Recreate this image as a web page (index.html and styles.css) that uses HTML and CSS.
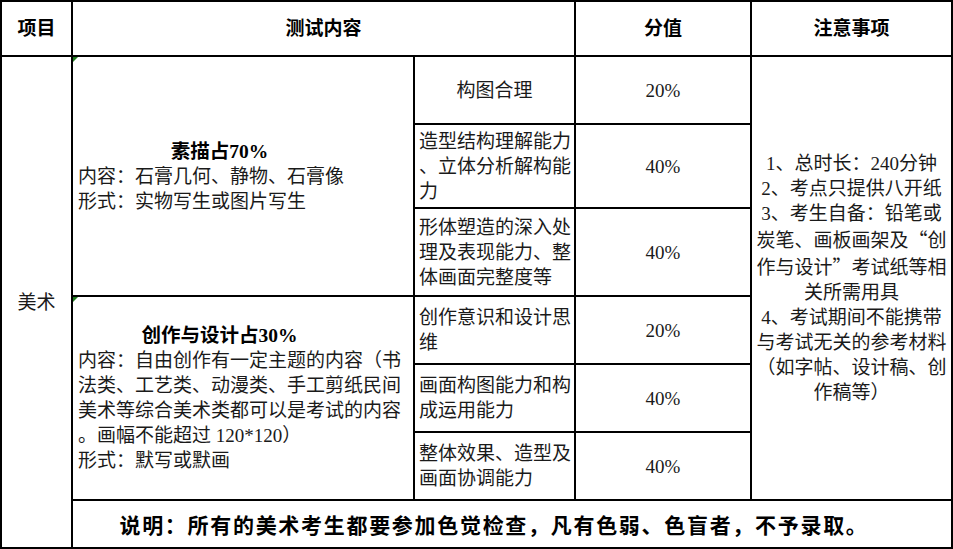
FILE: index.html
```html
<!DOCTYPE html>
<html lang="zh-CN">
<head>
<meta charset="utf-8">
<title>美术考试内容</title>
<link rel="stylesheet" href="styles.css">
</head>
<body>
<div class="sheet">
  <div class="cell head c1">项目</div>
  <div class="cell head c23">测试内容</div>
  <div class="cell head c4">分值</div>
  <div class="cell head c5">注意事项</div>

  <div class="cell subject">美术</div>

  <div class="cell block sketch flagged">
    <div class="block-title">素描占70%</div>
    <div class="line">内容：石膏几何、静物、石膏像</div>
    <div class="line">形式：实物写生或图片写生</div>
  </div>

  <div class="cell block design flagged">
    <div class="block-title">创作与设计占30%</div>
    <div class="line">内容：自由创作有一定主题的内容（书</div>
    <div class="line">法类、工艺类、动漫类、手工剪纸民间</div>
    <div class="line">美术等综合美术类都可以是考试的内容</div>
    <div class="line">。画幅不能超过 120*120）</div>
    <div class="line">形式：默写或默画</div>
  </div>

  <div class="cell notes">
    <div>1、总时长：240分钟</div>
    <div>2、考点只提供八开纸</div>
    <div>3、考生自备：铅笔或</div>
    <div>炭笔、画板画架及<span class="fw">“</span>创</div>
    <div>作与设计<span class="fw">”</span>考试纸等相</div>
    <div>关所需用具</div>
    <div>4、考试期间不能携带</div>
    <div>与考试无关的参考材料</div>
    <div>（如字帖、设计稿、创</div>
    <div>作稿等）</div>
  </div>

  <div class="cell item centered">构图合理</div>
  <div class="cell score">20%</div>

  <div class="cell item"><div>造型结构理解能力</div><div>、立体分析解构能</div><div>力</div></div>
  <div class="cell score">40%</div>

  <div class="cell item"><div>形体塑造的深入处</div><div>理及表现能力、整</div><div>体画面完整度等</div></div>
  <div class="cell score">40%</div>

  <div class="cell item"><div>创作意识和设计思</div><div>维</div></div>
  <div class="cell score">20%</div>

  <div class="cell item"><div>画面构图能力和构</div><div>成运用能力</div></div>
  <div class="cell score">40%</div>

  <div class="cell item"><div>整体效果、造型及</div><div>画面协调能力</div></div>
  <div class="cell score">40%</div>

  <div class="cell remark">说明：所有的美术考生都要参加色觉检查，凡有色弱、色盲者，不予录取。</div>
</div>
</body>
</html>
```

FILE: styles.css
```css
html, body {
  margin: 0;
  padding: 0;
  background: #ffffff;
}

body {
  font-family: "Liberation Serif", "Noto Sans CJK SC", serif;
  font-size: 19px;
  color: #1a1a1a;
}

.sheet {
  display: grid;
  grid-template-columns: 69px 340px 159px 174px 199px;
  grid-template-rows: 53px 66px 82px 86px 66px 66px 66px 46px;
  gap: 2px;
  padding: 2px;
  background: #000000;
  width: 949px;
}

.cell {
  background: #ffffff;
  display: flex;
  flex-direction: column;
  justify-content: center;
  line-height: 25px;
  white-space: nowrap;
  overflow: hidden;
}

.head {
  align-items: center;
  font-weight: 700;
  color: #000;
  font-size: 19px;
}

.c1 { grid-column: 1; grid-row: 1; }
.c23 { grid-column: 2 / 4; grid-row: 1; }
.c4 { grid-column: 4; grid-row: 1; }
.c5 { grid-column: 5; grid-row: 1; }

.subject {
  grid-column: 1;
  grid-row: 2 / 9;
  align-items: center;
}

.block {
  padding-left: 5px;
  position: relative;
}

.sketch { grid-column: 2; grid-row: 2 / 5; }
.design { grid-column: 2; grid-row: 5 / 8; }

.flagged::before {
  content: "";
  position: absolute;
  left: 0;
  top: 0;
  width: 0;
  height: 0;
  border-top: 5px solid #1f7a1f;
  border-right: 5px solid transparent;
}

.block-title {
  font-weight: 700;
  color: #000;
  text-align: center;
  padding-right: 52px;
  line-height: 25px;
  font-size: 19.5px;
}

.notes {
  grid-column: 5;
  grid-row: 2 / 8;
  align-items: center;
  text-align: center;
  line-height: 25px;
}

.fw {
  font-family: "Noto Sans CJK SC", sans-serif;
  font-feature-settings: "fwid";
  font-variant-east-asian: full-width;
}

.item {
  padding-left: 4px;
  line-height: 25px;
}

.item.centered {
  align-items: center;
  padding-left: 0;
}

.score {
  align-items: center;
}

.remark {
  grid-column: 2 / 6;
  grid-row: 8;
  align-items: center;
  font-family: "Noto Sans CJK SC", sans-serif;
  font-weight: 700;
  font-size: 21px;
  letter-spacing: 1.7px;
  color: #000;
  padding-right: 36px;
}
```
